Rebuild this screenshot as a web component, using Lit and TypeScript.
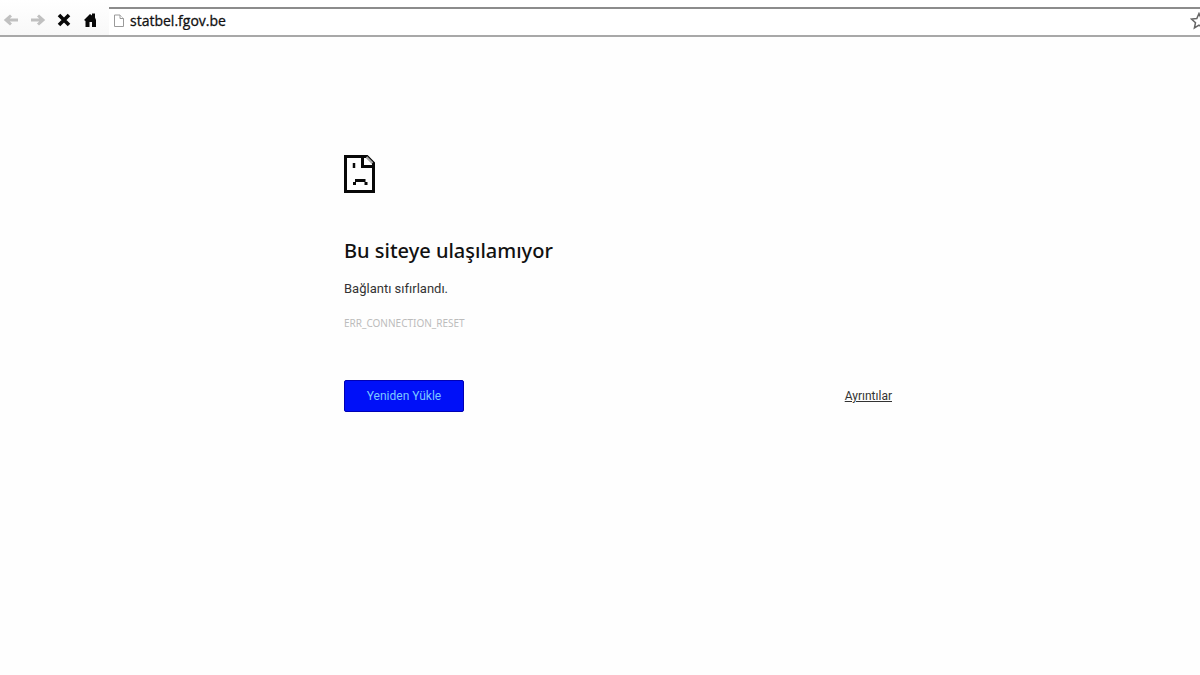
import { LitElement, html, css } from "lit";
import { customElement } from "lit/decorators.js";

@customElement("browser-toolbar")
class BrowserToolbar extends LitElement {
  static styles = css`
    :host {
      display: block;
    }
    .bar {
      display: flex;
      height: 37px;
      box-sizing: border-box;
      border-bottom: 2px solid #a8a8a8;
      background: #fff;
      overflow: hidden;
    }
    .nav {
      display: flex;
      align-items: center;
      flex: none;
      gap: 10px;
      padding: 5px 10px 0 3px;
      background: linear-gradient(#fff, #f8f8f8);
    }
    button {
      display: flex;
      padding: 0;
      border: 0;
      background: none;
    }
    svg {
      display: block;
      flex: none;
    }
    .field {
      display: flex;
      align-items: center;
      flex: 1;
      min-width: 0;
      margin-top: 7px;
      border-top: 2px solid #8c8c8c;
      padding: 0 0 3px 4px;
    }
    .url {
      flex: 1;
      min-width: 0;
      padding: 0;
      margin-left: 5px;
      border: 0;
      outline: 0;
      background: none;
      color: #111;
      font: 14px/18px "Open Sans", sans-serif;
      -webkit-text-stroke: 0.3px #111;
    }
    .star {
      margin-right: -8px;
    }
  `;

  render() {
    return html`
      <header class="bar">
        <nav class="nav">
          <button aria-label="Geri">
            <svg width="17" height="16" viewBox="0 0 17 16" fill="none" stroke="#c0c0c0" stroke-width="3">
              <path d="M15 8H4M8 3.5L3 8L8 12.5" />
            </svg>
          </button>
          <button aria-label="İleri">
            <svg width="17" height="16" viewBox="0 0 17 16" fill="none" stroke="#c0c0c0" stroke-width="3">
              <path d="M1 8H12M8 3.5L13 8L8 12.5" />
            </svg>
          </button>
          <button aria-label="Durdur">
            <svg width="16" height="16" viewBox="0 0 16 16" fill="none" stroke="#080808" stroke-width="3.6">
              <path d="M2 3L12 13M12 3L2 13" />
            </svg>
          </button>
          <button aria-label="Ana sayfa">
            <svg width="16" height="16" viewBox="0 0 16 16" fill="#080808">
              <path d="M1 8L7 2L9 3.500V1.500H12V5.500L13 8V15H9V10H6.500V15H2.500V9Z" />
            </svg>
          </button>
        </nav>
        <div class="field">
          <svg width="12" height="14" viewBox="0 0 12 14" fill="#fff" stroke="#9a9a9a">
            <path d="M1.500 1H7L10.500 4.500V12.500H1.500Z" />
            <path d="M7 1V4.500H10.500" />
          </svg>
          <input class="url" aria-label="Adres" value="statbel.fgov.be" spellcheck="false" />
          <button class="star" aria-label="Yer işareti ekle">
            <svg width="18" height="18" viewBox="0 0 18 18" fill="#fff" stroke="#666" stroke-width="1.500">
              <path d="M9 1.500L11.200 6.500L16.500 7L12.500 10.700L13.600 16L9 13.200L4.400 16L5.500 10.700L1.500 7L6.800 6.500Z" />
            </svg>
          </button>
        </div>
      </header>
    `;
  }
}

@customElement("error-page")
class ErrorPage extends LitElement {
  static styles = css`
    :host {
      display: block;
      padding: 117px 0 40px 36px;
      font-family: "Noto Sans", sans-serif;
      color: #333;
    }
    .content {
      max-width: 548px;
      margin: 0 auto;
    }
    .icon {
      display: block;
    }
    h1 {
      margin: 41px 0 0;
      font-size: 20px;
      line-height: 32px;
      font-weight: 500;
      color: #111;
    }
    p {
      margin: 12px 0 0;
      font: 13px/20px "Roboto", sans-serif;
    }
    .code {
      margin-top: 14px;
      font-size: 10px;
      line-height: 20px;
      color: #bcbcbc;
      font-family: "Noto Sans", sans-serif;
    }
    .actions {
      display: flex;
      align-items: center;
      justify-content: space-between;
      margin-top: 47px;
    }
    .reload {
      width: 120px;
      height: 32px;
      padding: 0;
      border: 1px solid #0000b4;
      border-radius: 2px;
      background: #0010f8;
      color: #7cc8ff;
      font: 12px/16px "Roboto", sans-serif;
    }
    .details {
      font: 12px/16px "Roboto", sans-serif;
      color: #333;
      text-decoration: underline;
    }
  `;

  render() {
    return html`
      <main class="content">
        <svg class="icon" width="32" height="40" viewBox="0 0 32 40" fill="none" stroke="#080808">
          <path d="M1.500 2.500H23L29.500 9V37.500H1.500Z" stroke-width="3" />
          <path d="M18.500 2V12.500H29" stroke-width="3" />
          <path d="M22.500 3L28.500 9" stroke="#aaa" stroke-width="2" />
          <path d="M10 9V14" stroke-width="2.500" />
          <path d="M9 29.500H12M20.500 29.500H23.500M11 26.500H21.500" stroke-width="3" />
        </svg>
        <h1>Bu siteye ulaşılamıyor</h1>
        <p>Bağlantı sıfırlandı.</p>
        <p class="code">ERR_CONNECTION_RESET</p>
        <div class="actions">
          <button class="reload">Yeniden Yükle</button>
          <a class="details" href="#details">Ayrıntılar</a>
        </div>
      </main>
    `;
  }
}

@customElement("app-root")
class AppRoot extends LitElement {
  static styles = css`
    :host {
      display: block;
      min-height: 100vh;
      background: #fefefe;
    }
  `;

  render() {
    return html`<browser-toolbar></browser-toolbar><error-page></error-page>`;
  }
}
